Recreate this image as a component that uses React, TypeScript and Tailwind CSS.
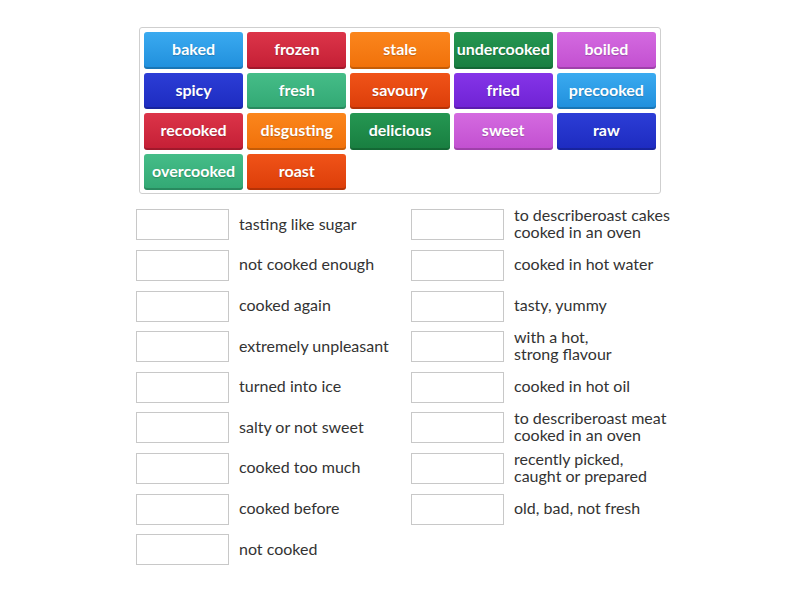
import { Fragment } from "react";

const tiles = [
  { label: "baked", from: "from-[#3aaaf0]", to: "to-[#1f8fdc]" },
  { label: "frozen", from: "from-[#dc3449]", to: "to-[#c41e35]" },
  { label: "stale", from: "from-[#fb861c]", to: "to-[#f07008]" },
  { label: "undercooked", from: "from-[#259752]", to: "to-[#187e40]" },
  { label: "boiled", from: "from-[#d46ae0]", to: "to-[#c24fd0]" },
  { label: "spicy", from: "from-[#2c3dd6]", to: "to-[#1d2bc0]" },
  { label: "fresh", from: "from-[#45bd88]", to: "to-[#32a874]" },
  { label: "savoury", from: "from-[#f05318]", to: "to-[#dc3d08]" },
  { label: "fried", from: "from-[#8534e8]", to: "to-[#6f22d4]" },
  { label: "precooked", from: "from-[#3aaaf0]", to: "to-[#1f8fdc]" },
  { label: "recooked", from: "from-[#dc3449]", to: "to-[#c41e35]" },
  { label: "disgusting", from: "from-[#fb861c]", to: "to-[#f07008]" },
  { label: "delicious", from: "from-[#259752]", to: "to-[#187e40]" },
  { label: "sweet", from: "from-[#d46ae0]", to: "to-[#c24fd0]" },
  { label: "raw", from: "from-[#2c3dd6]", to: "to-[#1d2bc0]" },
  { label: "overcooked", from: "from-[#45bd88]", to: "to-[#32a874]" },
  { label: "roast", from: "from-[#f05318]", to: "to-[#dc3d08]" },
];

const leftDefs = [
  ["tasting like sugar"],
  ["not cooked enough"],
  ["cooked again"],
  ["extremely unpleasant"],
  ["turned into ice"],
  ["salty or not sweet"],
  ["cooked too much"],
  ["cooked before"],
  ["not cooked"],
];

const rightDefs = [
  ["to describeroast cakes", "cooked in an oven"],
  ["cooked in hot water"],
  ["tasty, yummy"],
  ["with a hot,", "strong flavour"],
  ["cooked in hot oil"],
  ["to describeroast meat", "cooked in an oven"],
  ["recently picked,", "caught or prepared"],
  ["old, bad, not fresh"],
];

const Row = ({ lines }: { lines: string[] }) => (
  <div className="flex items-center h-[31px]">
    <div className="w-[93px] h-[31px] border border-[#c8c8c8] bg-white shrink-0" />
    <p className="ml-[10px] pb-[3px] text-[16px] leading-[17px] text-[#333] whitespace-nowrap">
      {lines.map((l, i) => (
        <Fragment key={l}>
          {i > 0 && <br />}
          {l}
        </Fragment>
      ))}
    </p>
  </div>
);

export default function App() {
  return (
    <div
      className="w-[800px] h-[600px] bg-white relative"
      style={{ fontFamily: "Lato, 'Open Sans', sans-serif" }}
    >
      <div className="pt-[27px] pl-[139px]">
        <div className="w-[522px] border border-[#cfcfcf] rounded-[3px] p-[4px] pb-[3px] grid grid-cols-5 gap-x-[4px] gap-y-[4px]">
          {tiles.map((t) => (
            <div
              key={t.label}
              className={`h-[36.6px] pb-[2px] rounded-[3px] bg-gradient-to-b ${t.from} ${t.to} flex items-center justify-center text-white font-bold text-[16px] shadow-[inset_0_-2px_0_rgba(0,0,0,0.18)] [text-shadow:0_1px_1px_rgba(0,0,0,0.2)]`}
            >
              {t.label}
            </div>
          ))}
        </div>
      </div>

      <div className="flex pl-[136px] pt-[15px]">
        <div className="w-[275px] flex flex-col gap-[9.6px]">
          {leftDefs.map((d) => (
            <Row key={d.join()} lines={d} />
          ))}
        </div>
        <div className="w-[275px] flex flex-col gap-[9.6px]">
          {rightDefs.map((d) => (
            <Row key={d.join()} lines={d} />
          ))}
        </div>
      </div>
    </div>
  );
}
